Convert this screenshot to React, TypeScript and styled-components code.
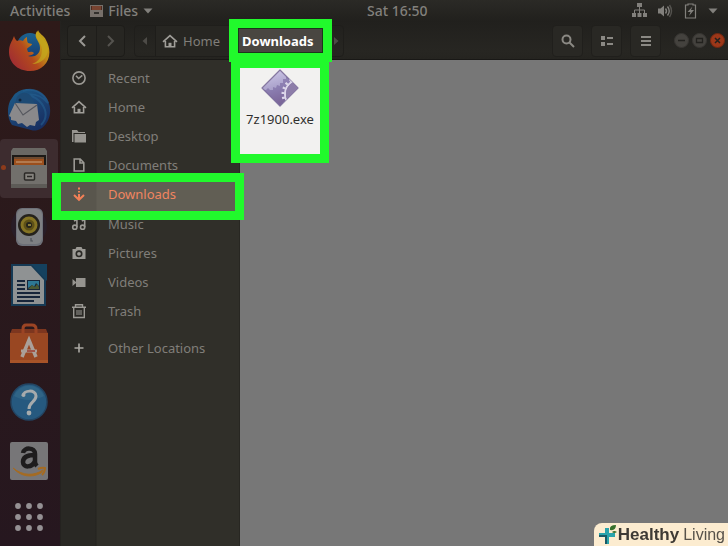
import React from "react";
import styled, { createGlobalStyle, css } from "styled-components";

const GlobalStyle = createGlobalStyle`
  *, *::before, *::after { box-sizing: border-box; }
  html, body { margin: 0; }
  body { overflow: hidden; background: #777; }
  button { font: inherit; color: inherit; border: 0; padding: 0; background: none; cursor: pointer; }
  svg { display: block; flex: none; }
`;

const ring = css`
  position: relative;
  z-index: 2;
  box-shadow: 0 0 0 9px #21f92c;
`;

const Desktop = styled.div`
  display: flex;
  flex-direction: column;
  height: 100vh;
  font-family: "Noto Sans", "Open Sans", sans-serif;
  font-size: 13px;
  line-height: 18px;
  color: #807e79;
`;

const TopBar = styled.header`
  display: grid;
  grid-template-columns: 357px auto 1fr;
  align-items: center;
  flex: none;
  height: 21px;
  padding: 0 10px;
  font-size: 14px;
  font-weight: 500;
  color: #82807c;
  background: linear-gradient(#2b2a26, #21201d);
`;

const TopGroup = styled.div<{ $end?: boolean }>`
  display: flex;
  align-items: center;
  justify-content: ${(p) => (p.$end ? "flex-end" : "flex-start")};
  gap: ${(p) => (p.$end ? "11px" : "20px")};
`;

const TopButton = styled.button`
  display: flex;
  align-items: center;
  gap: 5px;
`;

const Workspace = styled.div`
  display: flex;
  flex: 1;
  min-height: 0;
`;

const Dock = styled.nav`
  display: flex;
  flex-direction: column;
  flex: none;
  width: 60px;
  padding-top: 1px;
  background: linear-gradient(#2e1a19, #2a191c 45%, #26171f);
`;

const DockList = styled.div`
  display: flex;
  flex-direction: column;
  height: 468px;
`;

const DockButton = styled.button<{ $active?: boolean }>`
  position: relative;
  display: flex;
  flex: 1;
  align-items: center;
  justify-content: center;
  width: 58px;
  border-radius: 4px;
  background: ${(p) => (p.$active ? "#3d2c2f" : "none")};
`;

const RunningDot = styled.span`
  position: absolute;
  left: 1px;
  top: 26px;
  width: 5px;
  height: 5px;
  border-radius: 50%;
  background: #8d3b1c;
`;

const AppsButton = styled.button`
  display: flex;
  align-items: center;
  justify-content: center;
  width: 58px;
  height: 54px;
`;

const Window = styled.main`
  display: flex;
  flex-direction: column;
  flex: 1;
  min-width: 0;
  border-left: 1px solid #24221f;
`;

const HeaderBar = styled.header`
  display: flex;
  align-items: center;
  flex: none;
  height: 39px;
  padding: 3px 3px 2px 6px;
  background: linear-gradient(#21201d, #272622 80%, #252420);
  border-bottom: 1px solid #191816;
`;

const ButtonGroup = styled.div`
  display: flex;
  height: 32px;
  border: 1px solid #1d1c19;
  border-radius: 4px;
  background: #272622;
`;

const NavButton = styled.button<{ $dim?: boolean }>`
  display: flex;
  align-items: center;
  justify-content: center;
  width: 28px;
  color: ${(p) => (p.$dim ? "#55534f" : "#9a9894")};
  & + & { border-left: 1px solid #1e1d1a; }
`;

const PathBar = styled.div`
  display: flex;
  align-items: center;
  height: 32px;
  margin-left: 9px;
  border: 1px solid #1f1e1b;
  border-radius: 4px;
`;

const PathArrow = styled.button`
  display: flex;
  align-items: center;
  justify-content: center;
  align-self: stretch;
  width: 20px;
  color: #4d4b47;
`;

const PathHome = styled.button`
  display: flex;
  align-items: center;
  align-self: stretch;
  gap: 5px;
  width: 83px;
  padding-left: 6px;
  border-left: 1px solid #1e1d1a;
  background: #272622;
`;

const PathCurrent = styled.button`
  ${ring}
  height: 25px;
  width: 85px;
  padding-left: 3px;
  text-align: left;
  font-weight: 700;
  color: #fff;
  background: #494641;
  border: 1px solid #1c351a;
`;

const Spacer = styled.div`
  flex: 1;
`;

const Tools = styled.div`
  display: flex;
  gap: 8px;
`;

const ToolButton = styled.button`
  display: flex;
  align-items: center;
  justify-content: center;
  width: 31px;
  height: 32px;
  border: 1px solid #201f1c;
  border-radius: 4px;
  background: #292824;
  color: #8b8984;
`;

const WindowControls = styled.div`
  display: flex;
  gap: 3px;
  margin-left: 13px;
`;

const ControlButton = styled.button<{ $close?: boolean }>`
  display: flex;
  align-items: center;
  justify-content: center;
  width: 15px;
  height: 15px;
  border: 1px solid ${(p) => (p.$close ? "#722711" : "#383633")};
  border-radius: 50%;
  color: #22211e;
  background: ${(p) => (p.$close ? "#9c3719" : "#44423e")};
`;

const Body = styled.div`
  display: flex;
  flex: 1;
  min-height: 0;
`;

const Sidebar = styled.nav`
  flex: none;
  width: 179px;
  padding-top: 5px;
  border-right: 1px solid #282722;
  background: linear-gradient(90deg, #292824 34px, #24231f 35px, #302f29 36px);
`;

const PlaceList = styled.div`
  display: flex;
  flex-direction: column;
  height: 263px;
`;

const Place = styled.button<{ $active?: boolean }>`
  display: flex;
  align-items: center;
  flex: 1;
  width: 174px;
  padding: 0 0 4px 10px;
  gap: 21px;
  text-align: left;
  ${(p) =>
    p.$active &&
    css`
      ${ring}
      color: #f08560;
      background: linear-gradient(90deg, #59564d 35px, #615e54 36px);
    `}
`;

const OtherPlace = styled(Place)`
  height: 29px;
  margin-top: 7px;
`;

const Files = styled.section`
  flex: 1;
  min-width: 0;
  padding-top: 8px;
  background: #777;
`;

const FileTile = styled.button`
  ${ring}
  display: flex;
  flex-direction: column;
  align-items: center;
  width: 80px;
  height: 86px;
  gap: 2px;
  color: #30302e;
  background: #f2f1f0;
`;

const Brand = styled.a`
  position: fixed;
  right: 0;
  bottom: 0;
  z-index: 3;
  display: flex;
  align-items: center;
  height: 23px;
  padding: 0 3px 0 4px;
  border-radius: 8px 0 0 0;
  font: 16px/22px "Liberation Sans", sans-serif;
  color: #57524a;
  text-decoration: none;
  background: #fcecd0;
  strong { margin-right: 4px; font-size: 17px; color: #3e3a34; }
`;

const TriangleDown = () => (
  <svg width="10" height="6" viewBox="0 0 10 6"><path d="M0.5 0.5h9L5 5.5z" fill="#82807c" /></svg>
);

const HomeIcon = () => (
  <svg width="16" height="16" viewBox="0 0 16 16" fill="none" stroke="#a09e99" strokeWidth="1.6">
    <path d="M1 8.8 8 2.600l7 6.200M3.400 8v5.700h9.200V8" />
    <path d="M6.500 14V9.800h3V14z" fill="#a09e99" stroke="none" />
  </svg>
);

const placeIcons: Record<string, React.ReactNode> = {
  Recent: (
    <g fill="none" stroke="#9b9994" strokeWidth="1.6">
      <circle cx="8" cy="8" r="6.1" />
      <path d="m5 5.8 2.6 2.7 3.7-3.2" />
    </g>
  ),
  Desktop: (
    <g fill="#96948f">
      <path d="M1 2h5l1.5 2H14v1H2.5v9H1z" />
      <path d="M3.5 6H15v8.5H3.5z" />
    </g>
  ),
  Documents: (
    <path d="M3.2 2h6l3.6 3.7V14H3.2zM9 2.3V6h3.6" fill="none" stroke="#9b9994" strokeWidth="1.6" />
  ),
  Downloads: (
    <g fill="none" stroke="#f28057" strokeWidth="2">
      <path d="M8 1.5v2M8 5v1.5M8 8v5.5" />
      <path d="m3 9 5 4.8L13 9" />
    </g>
  ),
  Music: (
    <g fill="none" stroke="#9b9994" strokeWidth="1.6">
      <circle cx="3.8" cy="11.2" r="2.1" />
      <circle cx="11.6" cy="11.2" r="2.1" />
      <path d="M5.9 11.200V3.500L3 5M13.700 11.200V3.500L10.800 5" />
    </g>
  ),
  Pictures: (
    <g>
      <path d="M1.5 4h3l1-2h5l1 2h3v10h-13z" fill="#9b9994" />
      <circle cx="8" cy="8.8" r="2.7" fill="#9b9994" stroke="#292824" strokeWidth="1.6" />
    </g>
  ),
  Videos: <path d="M5 4h9.5v9H5zM1.5 5 5 8v1l-3.5 3z" fill="#96948f" />,
  Trash: (
    <g fill="none" stroke="#9b9994" strokeWidth="1.4">
      <path d="M1 4.200h14M4.500 3.800V1.700h7v2.100M2.700 5v9.500h10.600V5" />
      <path d="M6 7v5M8 7v5M10 7v5" strokeWidth="1" />
    </g>
  ),
  Other: <path d="M8 3.5v9M3.5 8h9" fill="none" stroke="#aaa8a3" strokeWidth="1.6" />,
};

const PlaceIcon = ({ name }: { name: string }) =>
  name === "Home" ? <HomeIcon /> : <svg width="16" height="16" viewBox="0 0 16 16">{placeIcons[name]}</svg>;

const Firefox = () => (
  <svg width="42" height="42" viewBox="0 0 42 42">
    <defs>
      <linearGradient id="fox" x1="1" y1="0.1" x2="0.05" y2="0.8">
        <stop offset="0" stopColor="#c4ab1c" /><stop offset="0.35" stopColor="#c08a18" />
        <stop offset="0.6" stopColor="#b34a1c" /><stop offset="1" stopColor="#a02c33" />
      </linearGradient>
      <linearGradient id="globe" x1="0" y1="0" x2="0" y2="1">
        <stop offset="0" stopColor="#1b628f" /><stop offset="1" stopColor="#173a70" />
      </linearGradient>
    </defs>
    <circle cx="22" cy="16" r="13" fill="url(#globe)" />
    <path d="M6 6c1 3 2 4 3 5 2-1 4-1 6 0 1-2 2-3 4-4 0 3 0 4 1 6l4 1c0 2-4 3-5 5l1 3c2 0 4-1 6 1-1 2-4 2-6 3 7 2 12-2 12-8 0-7-6-9-4-15 1-1 2-2 2-3 1 4 6 5 8 10 9 16-1 31-16 31C9 41 1 32 1 22 1 14 4 12 6 6z" fill="url(#fox)" />
    <path d="M29 1c-4 7 5 11 5 19 0 7-4 12-10 14 10 0 16-7 16-15C39 9 31 7 29 1z" fill="#c3a91d" opacity=".7" />
  </svg>
);

const Thunderbird = () => (
  <svg width="44" height="44" viewBox="0 0 44 44">
    <defs>
      <linearGradient id="bird" x1="0.2" y1="0" x2="0.8" y2="1">
        <stop offset="0" stopColor="#1c5a87" /><stop offset="0.5" stopColor="#1b4273" /><stop offset="1" stopColor="#172c5e" />
      </linearGradient>
    </defs>
    <path d="M3 13 7 7C14-1 29-1 37 7c9 9 8 25-2 33-5 3-8 3-11 2L5 37C0 30 0 20 3 13z" fill="url(#bird)" />
    <path d="M16 3c11-4 21 2 25 12-7-8-14-10-24-8 8 0 17 4 21 15 2 7-1 12-4 15" fill="none" stroke="#255f8f" strokeWidth="2" opacity=".6" />
    <path d="M8 16 10 9c3-5 10-6 14-1l4 8z" fill="#1d4a74" />
    <circle cx="13" cy="12" r="1.5" fill="#10243c" />
    <path d="m8 15 22 1 2 16-3 2-1 4-5-1-3 2-5-4-4 1-2-3-5-1 0-3-2-1z" fill="#8a898b" />
    <path d="m8 15 8 12 14-10" fill="none" stroke="#55575e" strokeWidth="1.200" />
  </svg>
);

const FilesIcon = () => (
  <svg width="38" height="42" viewBox="0 0 38 42">
    <path d="M3 1h32l2 3v37H1V4z" fill="#6a6864" />
    <path d="M2 8h34v12H2z" fill="#1d1a17" />
    <path d="M4 10h30v2H4z" fill="#6c4a31" />
    <path d="M4 12h30v6H4z" fill="#9b4f1d" />
    <path d="M6 14h26v2H6z" fill="#b27a4f" />
    <path d="M1 18h36v23H1z" fill="#72706c" /><path d="M1 37h36v4H1z" fill="#5d5b57" />
    <rect x="14.500" y="26" width="10" height="7" rx="1" fill="#85827d" stroke="#2b2926" strokeWidth="1.500" />
    <path d="M17 29.500h5" stroke="#2b2926" strokeWidth="1.500" />
  </svg>
);

const Rhythmbox = () => (
  <svg width="36" height="42" viewBox="0 0 36 42">
    <circle cx="18" cy="20" r="18" fill="#281d27" />
    <rect x="5" y="2" width="27" height="38" rx="6" fill="#6d7078" />
    <rect x="6" y="3" width="25" height="35" rx="6" fill="#7e8083" />
    <circle cx="18" cy="19" r="11" fill="#25221c" /><circle cx="18" cy="19" r="8.500" fill="#857424" />
    <circle cx="18" cy="19" r="5.500" fill="#5d5017" /><circle cx="18" cy="19" r="3" fill="#25241b" />
    <path d="M17 19h3" stroke="#ad9c47" strokeWidth="1.500" />
    <path d="M20 32v3h2" stroke="#4c5057" strokeWidth="1.200" fill="none" />
  </svg>
);

const Writer = () => (
  <svg width="38" height="42" viewBox="0 0 38 42">
    <path d="M1 0h36v16h-1v26H1z" fill="#163a55" /><path d="M21 0h16v17z" fill="#15415f" />
    <path d="M3 2h18l13 14v24H3z" fill="#8f9293" />
    <g fill="#17253a">
      <path d="M7 16h8v2H7zM7 20h8v2H7zM7 24h8v2H7zM7 28h23v2H7zM7 32h23v2H7zM7 36h17v2H7z" />
      <path d="M17 16h13v10H17z" />
    </g>
    <path d="M18 17h11v5l-3-3-2 4-2-2-4 3z" fill="#2e7895" />
    <path d="m18 25 4-4 3 2 2-3 2 3v2z" fill="#4a5a36" />
  </svg>
);

const Software = () => (
  <svg width="40" height="42" viewBox="0 0 40 42">
    <path d="M3 6h34l2 5H1z" fill="#7d361f" /><path d="M1 10h38v30H1z" fill="#994722" />
    <path d="M1 37h38v3H1z" fill="#a85328" />
    <path d="M14 11V6q0-4 3-4h6q4 0 4 4v5" fill="none" stroke="#9c4424" strokeWidth="3" />
    <path d="m13 34 7-17 7 17" fill="none" stroke="#aaa099" strokeWidth="3.500" />
    <path d="M12 28h16" stroke="#aaa099" strokeWidth="3" />
    <path d="M18 28h8" stroke="#9c3a2c" strokeWidth="1.500" />
  </svg>
);

const Help = () => (
  <svg width="40" height="40" viewBox="0 0 40 40">
    <circle cx="20" cy="20" r="18" fill="#26597f" stroke="#234563" strokeWidth="1.500" />
    <path d="M5 14a16 16 0 0 1 30 0q-15 8-30 0" fill="#306486" />
    <path d="M14 14c0-6 13-7 13 0 0 6-7 6-7 13" fill="none" stroke="#a7abac" strokeWidth="3" />
    <circle cx="14.500" cy="13" r="2" fill="#a7abac" /><circle cx="20" cy="31" r="2.400" fill="#a7abac" />
  </svg>
);

const Amazon = () => (
  <svg width="40" height="40" viewBox="0 0 40 40">
    <rect x="1" y="1" width="38" height="38" rx="2" fill="#777678" />
    <path d="M14 12c1-6 12-6 12 1v8c0 2 1 3 2 4M26 14c-9 0-12 3-12 7 0 6 9 6 12-1" fill="none" stroke="#1e1c1d" strokeWidth="4.500" />
    <path d="M4 27c10 8 21 8 30 2l-2 3C23 37 12 36 4 27z" fill="#a56b22" stroke="#a56b22" />
    <path d="M29 28q4-2 7-1 0 4-3 7" fill="none" stroke="#a56b22" strokeWidth="2" />
  </svg>
);

const AppsGrid = () => (
  <svg width="30" height="30" viewBox="0 0 30 30" fill="#959194">
    {[4, 15, 26].map((y) => [4, 15, 26].map((x) => <circle key={`${x}-${y}`} cx={x} cy={y} r="2.9" />))}
  </svg>
);

const ExeIcon = () => (
  <svg width="40" height="40" viewBox="0 0 40 40">
    <defs>
      <linearGradient id="exe" x1="0.3" y1="0" x2="0.6" y2="1">
        <stop offset="0" stopColor="#ccc6e6" /><stop offset="0.5" stopColor="#a89fc9" /><stop offset="1" stopColor="#76557f" />
      </linearGradient>
      <clipPath id="diamond"><path d="M20 2 38 20 20 38 2 20z" /></clipPath>
    </defs>
    <path d="M20 2 38 20 20 38 2 20z" fill="url(#exe)" stroke="#8577a0" strokeWidth="1.200" strokeLinejoin="round" />
    <g clipPath="url(#diamond)">
      <path d="M3 22h3l2-2 2 2h3v-3l3 1 1-3 3 1 0-3 3 0 0-4 3 0v-3l6 6 8 8-20 20z" fill="#7868a0" opacity=".6" />
      <circle cx="39" cy="26" r="14" fill="none" stroke="#ddd7ea" strokeWidth="2" />
      <circle cx="39" cy="26" r="16" fill="none" stroke="#ddd7ea" strokeWidth="3" strokeDasharray="2 3" />
      <circle cx="39" cy="26" r="13" fill="#8d7da9" />
    </g>
  </svg>
);

const dockApps = [
  { label: "Firefox", icon: <Firefox /> },
  { label: "Thunderbird", icon: <Thunderbird /> },
  { label: "Files", icon: <FilesIcon />, active: true },
  { label: "Rhythmbox", icon: <Rhythmbox /> },
  { label: "LibreOffice Writer", icon: <Writer /> },
  { label: "Ubuntu Software", icon: <Software /> },
  { label: "Help", icon: <Help /> },
  { label: "Amazon", icon: <Amazon /> },
];

const places = ["Recent", "Home", "Desktop", "Documents", "Downloads", "Music", "Pictures", "Videos", "Trash"];

export default function App() {
  return (
    <Desktop>
      <GlobalStyle />
      <TopBar>
        <TopGroup>
          <TopButton>Activities</TopButton>
          <TopButton>
            <svg width="13" height="14" viewBox="0 0 13 14">
              <path d="M0 1h13v12H0z" fill="#77706a" /><path d="M1 2h11v4H1z" fill="#4b2b21" />
              <path d="M2 3h9M2 5h9" stroke="#a65d40" /><path d="M4 8h5v2H4z" fill="#33302c" />
            </svg>
            Files
            <TriangleDown />
          </TopButton>
        </TopGroup>
        <TopButton>Sat 16:50</TopButton>
        <TopGroup $end>
          <TopButton aria-label="Network">
            <svg width="15" height="15" viewBox="0 0 15 15" fill="#82807c">
              <path d="M5 0h5v4H5zM0 10h4v4H0zM5.500 10h4v4h-4zM11 10h4v4h-4z" />
              <path d="M7.500 4v6M2.500 10V7h10v3" fill="none" stroke="#82807c" />
            </svg>
          </TopButton>
          <TopButton aria-label="Volume">
            <svg width="15" height="14" viewBox="0 0 15 14" fill="none" stroke="#82807c" strokeWidth="1.400">
              <path d="M0 4.500h2.500L6 1.500v11L2.500 9.500H0z" fill="#82807c" stroke="none" />
              <path d="M7.500 4.500q2 2.500 0 5M9.500 2.500q3.500 4.500 0 9" />
              <path d="M11.500 1q4 6 0 12" opacity=".5" />
            </svg>
          </TopButton>
          <TopButton aria-label="Battery">
            <svg width="13" height="16" viewBox="0 0 13 16">
              <path d="M4 2V1h5v1h2.500v13h-10V2z" fill="none" stroke="#82807c" strokeWidth="1.200" />
              <path d="M8.500 3.500 3.500 9h3l-1.500 4 5-6H7z" fill="#82807c" />
            </svg>
          </TopButton>
          <TopButton aria-label="System menu"><TriangleDown /></TopButton>
        </TopGroup>
      </TopBar>
      <Workspace>
        <Dock aria-label="Dock">
          <DockList>
            {dockApps.map((app) => (
              <DockButton key={app.label} aria-label={app.label} $active={app.active}>
                {app.active && <RunningDot />}
                {app.icon}
              </DockButton>
            ))}
          </DockList>
          <AppsButton aria-label="Show applications"><AppsGrid /></AppsButton>
        </Dock>
        <Window>
          <HeaderBar>
            <ButtonGroup>
              <NavButton aria-label="Back">
                <svg width="12" height="14" viewBox="0 0 12 14"><path d="M9 2 4 7l5 5" fill="none" stroke="currentColor" strokeWidth="2" /></svg>
              </NavButton>
              <NavButton aria-label="Forward" $dim>
                <svg width="12" height="14" viewBox="0 0 12 14"><path d="m3 2 5 5-5 5" fill="none" stroke="currentColor" strokeWidth="2" /></svg>
              </NavButton>
            </ButtonGroup>
            <PathBar>
              <PathArrow aria-label="Scroll path left">
                <svg width="6" height="10" viewBox="0 0 6 10"><path d="M5 1v8L0.500 5z" fill="currentColor" /></svg>
              </PathArrow>
              <PathHome><HomeIcon />Home</PathHome>
              <PathCurrent>Downloads</PathCurrent>
              <PathArrow aria-label="Scroll path right">
                <svg width="14" height="10" viewBox="0 0 14 10"><path d="M8 1v8l4.500-4z" fill="currentColor" /></svg>
              </PathArrow>
            </PathBar>
            <Spacer />
            <Tools>
              <ToolButton aria-label="Search">
                <svg width="14" height="14" viewBox="0 0 14 14" fill="none" stroke="currentColor" strokeWidth="2"><circle cx="5.500" cy="5.500" r="4" /><path d="m8.500 8.500 4.500 4.500" /></svg>
              </ToolButton>
              <ToolButton aria-label="List view">
                <svg width="12" height="10" viewBox="0 0 12 10" fill="currentColor"><path d="M0 0h4v4H0zM0 6h4v4H0zM6 1h6v2H6zM6 7h6v2H6z" /></svg>
              </ToolButton>
              <ToolButton aria-label="Menu">
                <svg width="10" height="10" viewBox="0 0 10 10" fill="currentColor"><path d="M0 0h10v2H0zM0 4h10v2H0zM0 8h10v2H0z" /></svg>
              </ToolButton>
            </Tools>
            <WindowControls>
              <ControlButton aria-label="Minimize">
                <svg width="9" height="9" viewBox="0 0 9 9"><path d="M1 4.500h7" stroke="currentColor" strokeWidth="1.500" /></svg>
              </ControlButton>
              <ControlButton aria-label="Maximize">
                <svg width="9" height="9" viewBox="0 0 9 9"><path d="M1.500 2.500h6v4h-6z" fill="none" stroke="currentColor" strokeWidth="1.300" /></svg>
              </ControlButton>
              <ControlButton aria-label="Close" $close>
                <svg width="9" height="9" viewBox="0 0 9 9"><path d="m2 2 5 5M7 2 2 7" stroke="currentColor" strokeWidth="1.500" /></svg>
              </ControlButton>
            </WindowControls>
          </HeaderBar>
          <Body>
            <Sidebar aria-label="Places">
              <PlaceList>
                {places.map((name) => (
                  <Place key={name} $active={name === "Downloads"}>
                    <PlaceIcon name={name} />
                    {name}
                  </Place>
                ))}
              </PlaceList>
              <OtherPlace><PlaceIcon name="Other" />Other Locations</OtherPlace>
            </Sidebar>
            <Files aria-label="Downloads">
              <FileTile><ExeIcon />7z1900.exe</FileTile>
            </Files>
          </Body>
        </Window>
      </Workspace>
      <Brand href="#">
        <svg width="20" height="22" viewBox="0 0 20 22">
          <path d="M1 9h6V4h4v5h6v4h-6v7H7v-7H1z" fill="#2aa3ab" />
          <path d="M1 11h8v9H7v-7H1z" fill="#185b66" />
          <path d="M12 6q-1-5 6-5 0 6-6 5z" fill="#37702b" /><path d="M14 8q2-2 5 0-3 2-5 0z" fill="#37702b" />
        </svg>
        <strong>Healthy</strong>Living
      </Brand>
    </Desktop>
  );
}
